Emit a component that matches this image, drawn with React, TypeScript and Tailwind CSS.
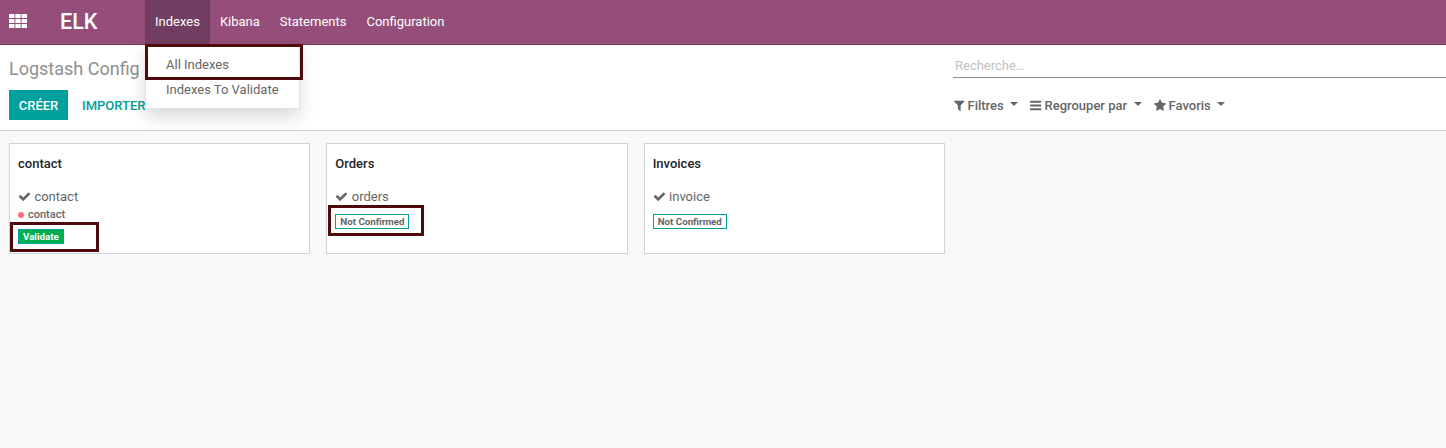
import React from "react";

const CHECK =
  "M1671 566q0 40-28 68l-724 724-136 136q-28 28-68 28t-68-28l-136-136-362-362q-28-28-28-68t28-68l136-136q28-28 68-28t68 28l294 295 656-657q28-28 68-28t68 28l136 136q28 28 28 68z";
const FILTER =
  "M1595 295q17 41-14 70l-493 493v742q0 42-39 59-13 5-25 5-27 0-45-19l-256-256q-19-19-19-45v-486l-493-493q-31-29-14-70 17-39 59-39h1280q42 0 59 39z";
const BARS =
  "M1664 1344v128q0 26-19 45t-45 19h-1408q-26 0-45-19t-19-45v-128q0-26 19-45t45-19h1408q26 0 45 19t19 45zm0-512v128q0 26-19 45t-45 19h-1408q-26 0-45-19t-19-45v-128q0-26 19-45t45-19h1408q26 0 45 19t19 45zm0-512v128q0 26-19 45t-45 19h-1408q-26 0-45-19t-19-45v-128q0-26 19-45t45-19h1408q26 0 45 19t19 45z";
const STAR =
  "M1728 647q0 22-26 48l-363 354 86 500q1 7 1 20 0 21-10.5 35.5t-30.5 14.5q-19 0-40-12l-449-236-449 236q-22 12-40 12-21 0-31.5-14.5t-10.5-35.5q0-6 2-20l86-500-364-354q-25-27-25-48 0-37 56-46l502-73 225-455q19-41 49-41t49 41l225 455 502 73q56 9 56 46z";

function Glyph({ d, box, className }: { d: string; box: string; className: string }) {
  return (
    <svg viewBox={box} className={className} fill="currentColor" aria-hidden="true">
      <path d={d} />
    </svg>
  );
}

function AppsIcon() {
  return (
    <svg viewBox="0 0 18 14" className="h-[14px] w-[18px]" fill="currentColor" aria-hidden="true">
      {[0, 5, 10].map((y) =>
        [0, 6.3, 12.6].map((x) => <rect key={`${x}-${y}`} x={x} y={y} width="5.4" height="4" rx="0.3" />)
      )}
    </svg>
  );
}

type FilterButtonProps = { d: string; box: string; size: string; label: string };

function FilterButton({ d, box, size, label }: FilterButtonProps) {
  return (
    <button className="flex items-center text-[13px] leading-5 font-medium text-[#666666]">
      <Glyph d={d} box={box} className={size} />
      <span className="ml-[3px]">{label}</span>
      <span className="mb-[4px] ml-[6.5px] border-x-4 border-t-4 border-x-transparent border-t-[#666666]" />
    </button>
  );
}

type CardProps = { title: string; name: string; tag?: string; status: string; done?: boolean; marked?: boolean };

function Card({ title, name, tag, status, done, marked }: CardProps) {
  return (
    <article className="h-[111px] flex-1 border border-[#ced4da] bg-white px-2 pt-[10px] text-[#666666]">
      <h2 className="text-[13px] leading-5 font-medium text-[#212529]">{title}</h2>
      <div className="mt-[13px] flex h-5 items-center text-[13px]">
        <Glyph d={CHECK} box="0 0 1792 1792" className="mb-[2px] size-[13px]" />
        <span className="ml-[3.4px]">{name}</span>
      </div>
      {tag && (
        <div className="flex h-[15px] items-center text-[11px] font-medium">
          <span className="size-[6px] rounded-full bg-[#ff6b7a]" />
          <span className="ml-1 pt-[2px]">{tag}</span>
        </div>
      )}
      <div className="relative mt-[7px] w-fit">
        <span
          className={
            done
              ? "flex h-[15px] items-center border border-[#00a09d] bg-[#00b050] px-1 pt-px text-[9.75px] font-bold text-white"
              : "flex h-[15px] w-[74px] items-center border border-[#00a09d] px-1 pt-px text-[9.75px] font-bold whitespace-nowrap text-[#666666]"
          }
        >
          {status}
        </span>
        {marked && (
          <span
            className={
              done
                ? "absolute -top-[7px] -left-2 h-[30px] w-[89px] border-3 border-[#4f0a0e]"
                : "absolute -top-[9px] -left-[7px] h-[31px] w-[96px] border-3 border-[#4f0a0e]"
            }
          />
        )}
      </div>
    </article>
  );
}

export default function App() {
  return (
    <div className="h-[448px] w-[1446px] overflow-hidden bg-[#f8f8f8] font-['Roboto',sans-serif]">
      <header className="flex h-[45px] border-b border-[#713d60] bg-[#944e79] text-white">
        <button className="flex w-[60px] items-center pb-[2px] pl-[9px]">
          <AppsIcon />
        </button>
        <h1 className="flex w-[85px] items-center text-[21.5px] font-medium">ELK</h1>
        <nav className="flex text-[13px]">
          <div className="relative flex">
            <button className="flex items-center bg-[#713d60] px-[10px] pb-px">Indexes</button>
            <div className="absolute top-[44px] left-0 z-10 flex h-[65px] w-[155px] flex-col border border-[#dee2e6] bg-white pt-[7px] pl-5 leading-[25px] whitespace-nowrap text-[#666666] shadow-[0_8px_16px_rgba(0,0,0,0.15)]">
              <a>All Indexes</a>
              <a>Indexes To Validate</a>
              <span className="absolute -top-px -left-px h-[36px] w-[158px] border-3 border-[#4f0a0e]" />
            </div>
          </div>
          <button className="flex items-center px-[10px] pb-px">Kibana</button>
          <button className="flex items-center px-[10px] pb-px">Statements</button>
          <button className="flex items-center px-[10px] pb-px">Configuration</button>
        </nav>
      </header>
      <section className="flex h-[86px] border-b border-[#cccccc] bg-white">
        <div className="w-[953px] pt-[10px] pl-[9px]">
          <div className="text-[18px] leading-7 text-[#8f8f8f]">Logstash Config</div>
          <div className="mt-[7px] flex text-[13px] font-medium">
            <button className="h-[30px] w-[59px] bg-[#00a09d] pt-px text-white">CRÉER</button>
            <button className="ml-[14px] h-[30px] pt-px text-[#00a09d]">IMPORTER</button>
          </div>
        </div>
        <div className="flex-1">
          <div className="h-[33px] border-b border-[#8f8f8f] pt-[11px] pl-[2px] text-[13px] leading-5 text-[#bfbfbf]">
            Recherche…
          </div>
          <div className="mt-[18px] flex gap-3">
            <FilterButton d={FILTER} box="192 0 1408 1792" size="mb-px ml-px h-[13px] w-[10.5px]" label="Filtres" />
            <FilterButton d={BARS} box="128 0 1536 1792" size="mb-px h-[13px] w-[11.3px]" label="Regrouper par" />
            <FilterButton d={STAR} box="64 0 1664 1792" size="mb-px h-[13px] w-[12px]" label="Favoris" />
          </div>
        </div>
      </section>
      <main className="flex w-[945px] gap-4 pt-3 pl-[9px]">
        <Card title="contact" name="contact" tag="contact" status="Validate" done marked />
        <Card title="Orders" name="orders" status="Not Confirmed" marked />
        <Card title="Invoices" name="invoice" status="Not Confirmed" />
      </main>
    </div>
  );
}
